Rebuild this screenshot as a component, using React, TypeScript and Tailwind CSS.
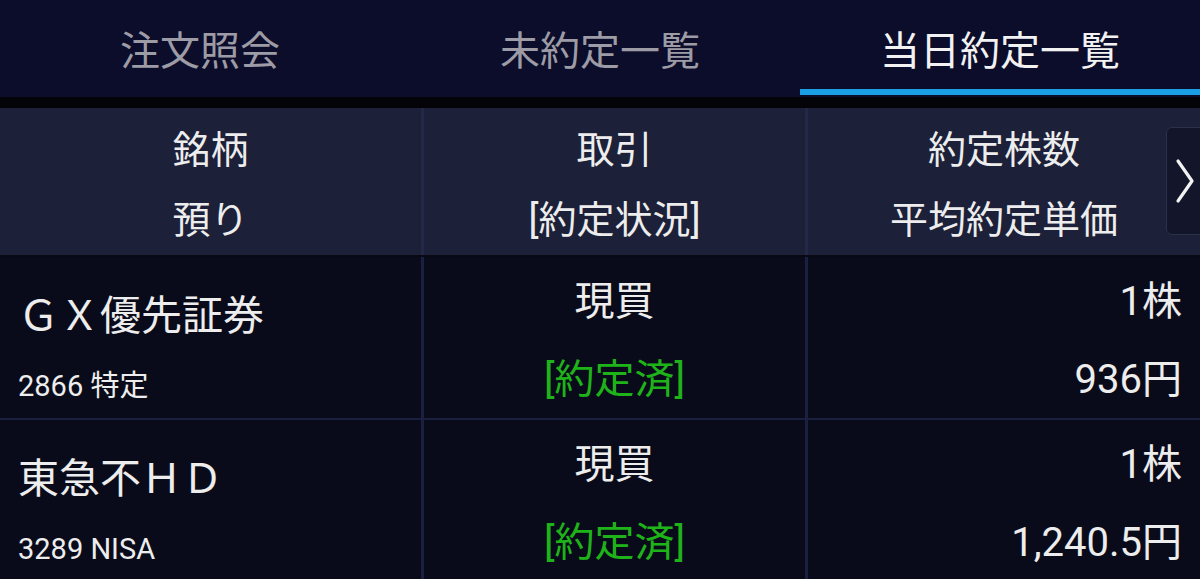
import React from 'react';

interface Execution {
  name: string;
  code: string;
  side: string;
  status: string;
  qty: string;
  price: string;
}

const rows: Execution[] = [
  { name: 'ＧＸ優先証券', code: '2866 特定', side: '現買', status: '[約定済]', qty: '1株', price: '936円' },
  { name: '東急不ＨＤ', code: '3289 NISA', side: '現買', status: '[約定済]', qty: '1株', price: '1,240.5円' },
];

const tabs = ['注文照会', '未約定一覧', '当日約定一覧'];

const font = { fontFamily: '"Roboto", "Noto Sans CJK JP", sans-serif' };

const App: React.FC = () => {
  const activeTab = 2;

  return (
    <div className="w-[1200px] h-[579px] overflow-hidden bg-[#030308] text-[#ededed]" style={font}>
      {/* Tabs */}
      <div className="flex h-[97px] bg-[#0c0d2a]">
        {tabs.map((tab, i) => (
          <div key={tab} className="flex-1 flex flex-col">
            <div
              className={`flex-1 flex items-center justify-center pt-[14px] text-[40px] ${
                i === activeTab ? 'text-[#f2f2f2]' : 'text-[#9c9ba6]'
              }`}
            >
              {tab}
            </div>
            <div className={`h-[6px] mb-[2px] ${i === activeTab ? 'bg-[#1a9fe5]' : ''}`} />
          </div>
        ))}
      </div>

      {/* Gap */}
      <div className="h-[11px]" />

      {/* Column header */}
      <div className="relative flex h-[147px] bg-[#1c2038] text-[38px]">
        <div className="w-[421px] flex flex-col items-center pt-[7px]">
          <div className="leading-[70px]">銘柄</div>
          <div className="leading-[70px]">預り</div>
        </div>
        <div className="w-[3px] bg-[#232848]" />
        <div className="w-[381px] flex flex-col items-center pt-[7px]">
          <div className="leading-[70px]">取引</div>
          <div className="leading-[70px]">[約定状況]</div>
        </div>
        <div className="w-[3px] bg-[#232848]" />
        <div className="flex-1 flex flex-col items-center pt-[7px]">
          <div className="leading-[70px]">約定株数</div>
          <div className="leading-[70px]">平均約定単価</div>
        </div>

        {/* Scroll button */}
        <div className="absolute right-[-6px] top-[19px] w-[40px] h-[108px] flex items-center pl-[8px] rounded-[6px] border border-[#2c3049] bg-[#13152a]">
          <svg width="20" height="46" viewBox="0 0 20 46" fill="none">
            <polyline
              points="3,3 17,23 3,43"
              stroke="#f2f2f2"
              strokeWidth="3.2"
              strokeLinecap="round"
              strokeLinejoin="round"
            />
          </svg>
        </div>
      </div>

      <div className="h-[2px] bg-[#080914]" />

      {/* Rows */}
      {rows.map((row, i) => (
        <React.Fragment key={row.code}>
          {i > 0 && <div className="h-[2px] bg-[#1b2040]" />}
          <div className="flex h-[161px] bg-[#0a0b1a]">
            <div className="w-[421px] flex flex-col pl-[18px] pt-[29px]">
              <div className="text-[41px] leading-[60px]">{row.name}</div>
              <div className="mt-[20px] text-[29px] leading-[40px]">{row.code}</div>
            </div>
            <div className="w-[3px] bg-[#1b2040]" />
            <div className="w-[381px] flex flex-col items-center pt-[6px] text-[40px]">
              <div className="leading-[78px]">{row.side}</div>
              <div className="leading-[78px] text-[#1fb31a]">{row.status}</div>
            </div>
            <div className="w-[3px] bg-[#1b2040]" />
            <div className="flex-1 flex flex-col items-end pr-[18px] pt-[6px] text-[40px]">
              <div className="leading-[78px]">{row.qty}</div>
              <div className="leading-[78px]">{row.price}</div>
            </div>
          </div>
        </React.Fragment>
      ))}
    </div>
  );
};

export default App;
